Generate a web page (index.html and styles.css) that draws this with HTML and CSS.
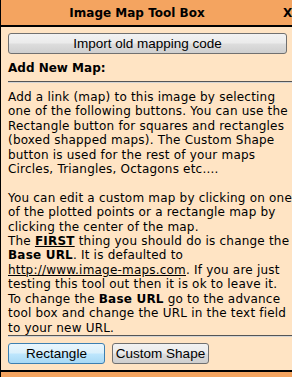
FILE: index.html
```html
<!DOCTYPE html>
<html>
<head>
<meta charset="utf-8">
<link rel="stylesheet" href="styles.css">
</head>
<body>
<div class="panel">
  <div class="header">
    <div class="title">Image Map Tool Box</div>
    <div class="close">X</div>
  </div>
  <div class="content">
    <button class="btn btn-wide">Import old mapping code</button>
    <div class="section-title">Add New Map:</div>
    <div class="rule"></div>
    <p class="text">Add a link (map) to this image by selecting<br>one of the following buttons. You can use the<br>Rectangle button for squares and rectangles<br>(boxed shapped maps). The Custom Shape<br>button is used for the rest of your maps<br>Circles, Triangles, Octagons etc....<br><br>You can edit a custom map by clicking on one<br>of the plotted points or a rectangle map by<br>clicking the center of the map.<br>The <b><u>FIRST</u></b> thing you should do is change the<br><b>Base URL</b>. It is defaulted to<br><u>http://www.image-maps.com</u>. If you are just<br>testing this tool out then it is ok to leave it.<br>To change the <b>Base URL</b> go to the advance<br>tool box and change the URL in the text field<br>to your new URL.</p>
    <div class="rule"></div>
    <div class="actions">
      <button class="btn btn-small btn-active">Rectangle</button>
      <button class="btn btn-small">Custom Shape</button>
    </div>
  </div>
  <div class="next-header"></div>
</div>
</body>
</html>
```
FILE: styles.css
```css
html, body {
  margin: 0;
  padding: 0;
  overflow: hidden;
  background: #ffe4c4;
}
.panel {
  width: 300px;
  border-left: 1px solid #000;
  background: #ffe4c4;
  font-family: "DejaVu Sans", Verdana, sans-serif;
  color: #000;
}
.header {
  height: 25px;
  background: #f4a460;
  border-bottom: 2px solid #000;
  display: flex;
  align-items: center;
}
.title {
  width: 272px;
  text-align: center;
  font-weight: bold;
  font-size: 12px;
}
.close {
  font-weight: bold;
  font-size: 12px;
  padding-left: 10px;
}
.content {
  padding: 6px 7px 6px 7px;
}
.btn {
  font-family: "Liberation Sans", Arial, sans-serif;
  font-size: 13.5px;
  color: #000;
  height: 21px;
  border: 1px solid #707070;
  border-radius: 3px;
  background: linear-gradient(#f2f2f2 0%, #ebebeb 48%, #dddddd 52%, #cfcfcf 100%);
  padding: 0;
  margin: 0;
  display: block;
}
.btn-wide {
  width: 279px;
}
.section-title {
  font-weight: bold;
  font-size: 12px;
  line-height: 15px;
  margin-top: 7px;
}
.rule {
  height: 0;
  border-top: 1px solid #555;
  border-bottom: 1px solid #d4d4d4;
  margin-right: -10px;
}
.section-title + .rule {
  margin-top: 5px;
}
.text {
  font-size: 12px;
  line-height: 14.4px;
  letter-spacing: 0.2px;
  white-space: nowrap;
  margin: 7px 0 0 0;
}
.actions {
  display: flex;
  gap: 7px;
  margin-top: 6px;
}
.btn-small {
  width: 97px;
}
.btn-active {
  border-color: #3c7fb1;
  background: linear-gradient(#eaf6fd 0%, #d9f0fc 48%, #bee6fd 52%, #a7d9f5 100%);
}
.next-header {
  height: 10px;
  background: #f4a460;
  border-top: 2px solid #000;
}
```
